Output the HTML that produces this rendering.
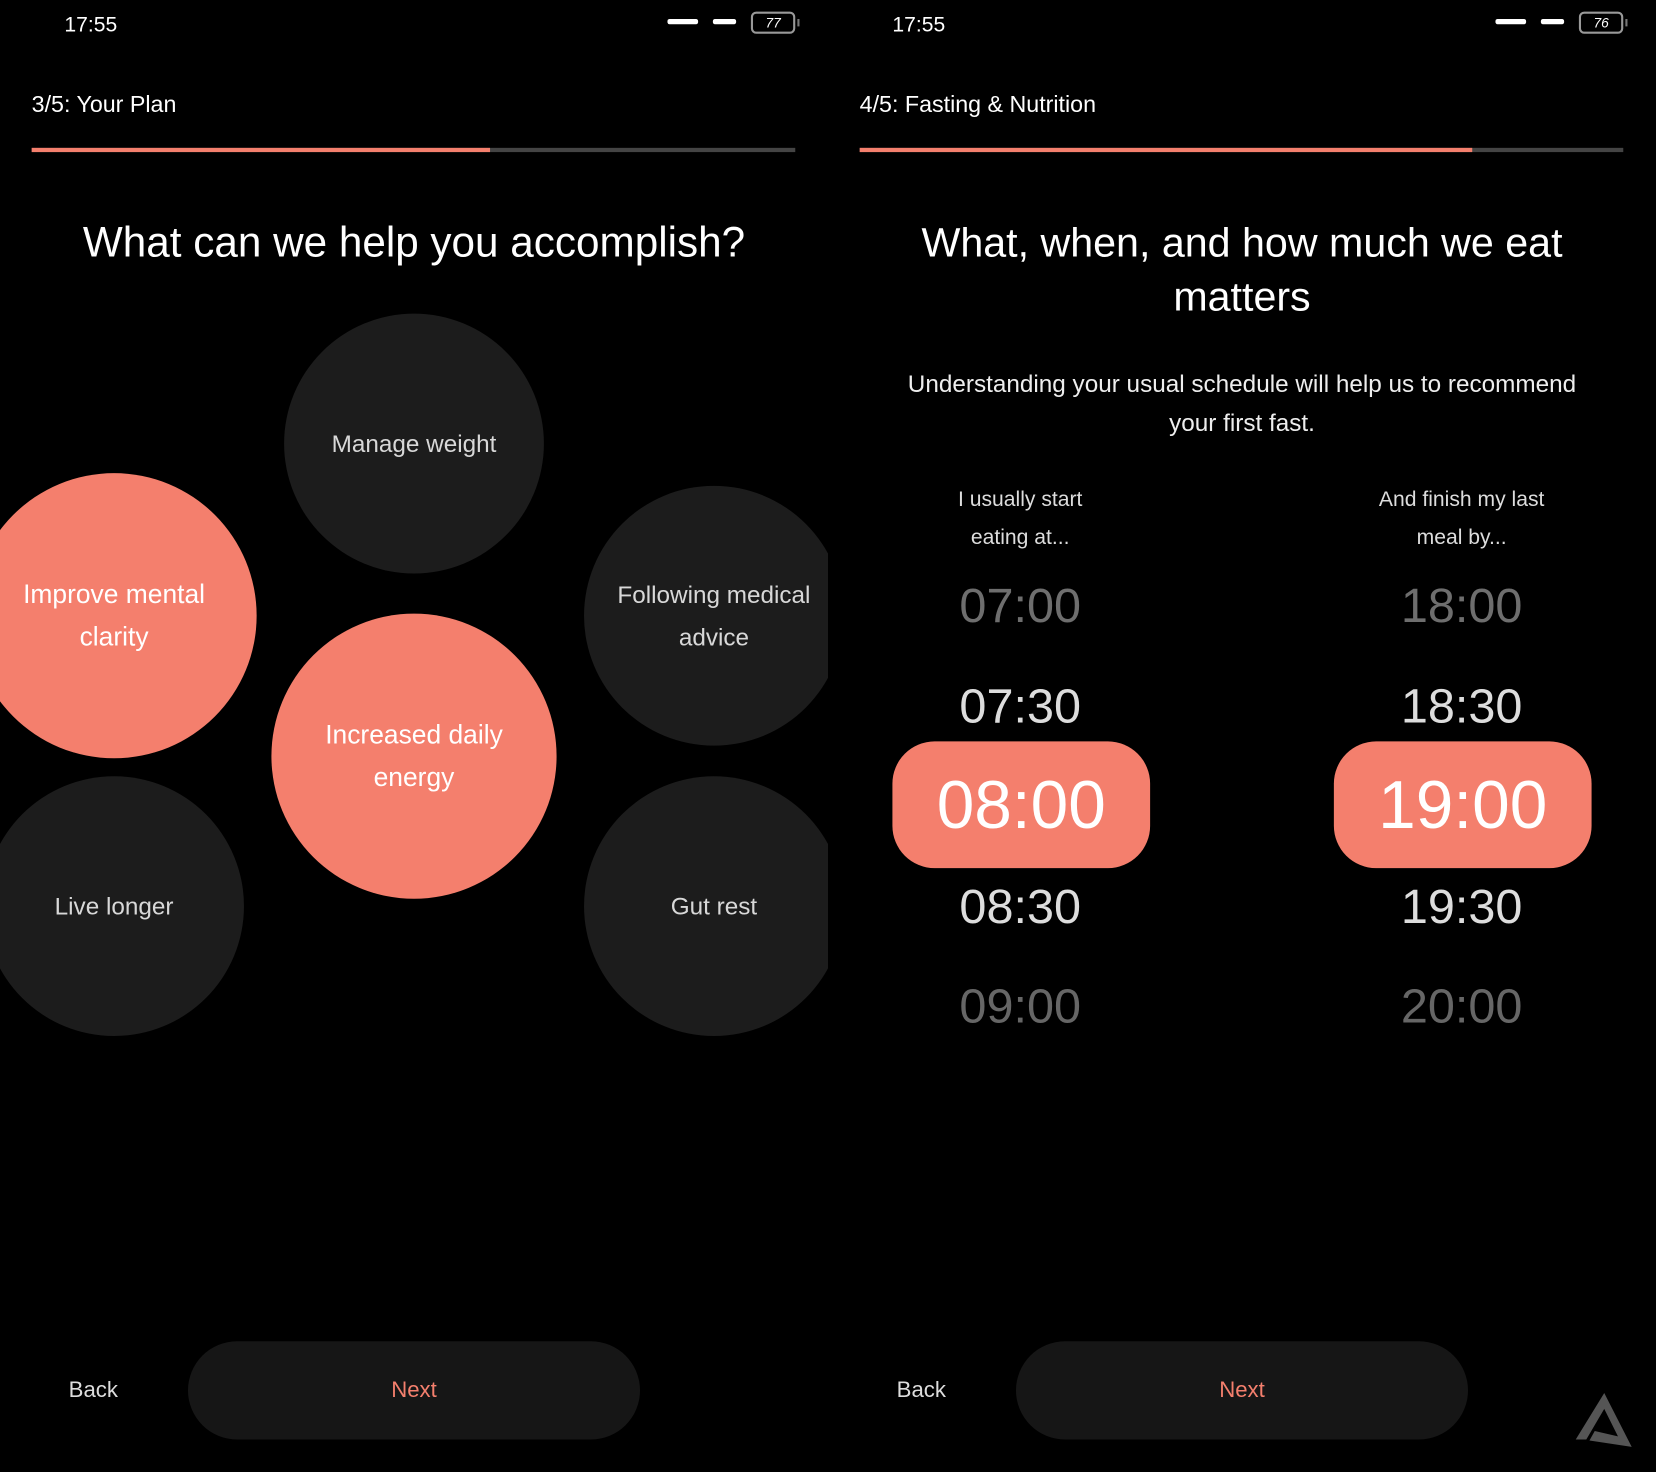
<!DOCTYPE html>
<html><head><meta charset="utf-8"><style>
html,body{margin:0;padding:0;background:#000;width:1656px;height:1472px;overflow:hidden}
#w{position:absolute;left:0;top:0;width:1568px;height:1394px;transform:scale(1.05612);transform-origin:0 0;font-family:"Liberation Sans",sans-serif;color:#fff}
.p{position:absolute;top:0;width:784px;height:1394px;overflow:hidden}
.c{position:absolute;transform:translate(-50%,-50%);white-space:nowrap;text-align:center;line-height:1}
.circ{position:absolute;border-radius:50%;background:#1c1c1c;display:flex;align-items:center;justify-content:center;text-align:center;color:#d8d8d8;font-size:23px;line-height:40px}
.co{background:#f47f6d;color:#fff;font-size:25px}
.bar{position:absolute;left:30px;top:140px;width:723px;height:4px;background:#444}
.bar i{position:absolute;left:0;top:0;height:4px;background:#f47f6d}
.next{position:absolute;left:178px;top:1270px;width:428px;height:93px;border-radius:47px;background:#161616;color:#f47f6d;font-size:21px;display:flex;align-items:center;justify-content:center}
.back{position:absolute;left:65px;top:1305px;font-size:21px;color:#ddd}
.dash{position:absolute;top:18px;height:5px;background:#fff;border-radius:2px}
.bat{position:absolute;top:11px;left:711px;width:38px;height:17px;border:2px solid #999;border-radius:5px;font-size:13px;font-style:italic;text-align:center;line-height:17px;color:#fff}
.bat:after{content:"";position:absolute;right:-6px;top:5px;width:2px;height:7px;background:#777}
.t{position:absolute;transform:translate(-50%,-50%);font-size:46px;white-space:nowrap}
.pill{position:absolute;top:702px;width:244px;height:120px;border-radius:40px;background:#f47f6d;color:#fff;font-size:64px;display:flex;align-items:center;justify-content:center}
</style></head><body><div id="w">
<div class="p" style="left:0">
 <div class="c" style="left:86px;top:24px;font-size:20px">17:55</div>
 <div class="dash" style="left:632px;width:29px"></div><div class="dash" style="left:675px;width:22px"></div>
 <div class="bat">77</div>
 <div style="position:absolute;left:30px;top:86px;font-size:22px">3/5: Your Plan</div>
 <div class="bar"><i style="width:434px"></i></div>
 <div class="c" style="left:392px;top:230px;font-size:40px">What can we help you accomplish?</div>
 <div class="circ" style="left:269px;top:297px;width:246px;height:246px">Manage weight</div>
 <div class="circ co" style="left:-27px;top:448px;width:270px;height:270px">Improve mental<br>clarity</div>
 <div class="circ" style="left:553px;top:460px;width:246px;height:246px">Following medical<br>advice</div>
 <div class="circ co" style="left:257px;top:581px;width:270px;height:270px">Increased daily<br>energy</div>
 <div class="circ" style="left:-15px;top:735px;width:246px;height:246px">Live longer</div>
 <div class="circ" style="left:553px;top:735px;width:246px;height:246px">Gut rest</div>
 <div class="back">Back</div>
 <div class="next">Next</div>
</div>
<div class="p" style="left:784px">
 <div class="c" style="left:86px;top:24px;font-size:20px">17:55</div>
 <div class="dash" style="left:632px;width:29px"></div><div class="dash" style="left:675px;width:22px"></div>
 <div class="bat">76</div>
 <div style="position:absolute;left:30px;top:86px;font-size:22px">4/5: Fasting &amp; Nutrition</div>
 <div class="bar"><i style="width:580px"></i></div>
 <div class="c" style="left:392px;top:256px;font-size:39px;line-height:51px">What, when, and how much we eat<br>matters</div>
 <div class="c" style="left:392px;top:382px;font-size:23px;line-height:37px;color:#eee">Understanding your usual schedule will help us to recommend<br>your first fast.</div>
 <div class="c" style="left:182px;top:491px;font-size:20px;line-height:36px;color:#ddd">I usually start<br>eating at...</div>
 <div class="c" style="left:600px;top:491px;font-size:20px;line-height:36px;color:#ddd">And finish my last<br>meal by...</div>
 <div class="t" style="left:182px;top:573px;color:#6e6e6e">07:00</div>
 <div class="t" style="left:182px;top:668px;color:#ddd">07:30</div>
 <div class="pill" style="left:61px">08:00</div>
 <div class="t" style="left:182px;top:858px;color:#ddd">08:30</div>
 <div class="t" style="left:182px;top:952px;color:#666">09:00</div>
 <div class="t" style="left:600px;top:573px;color:#6e6e6e">18:00</div>
 <div class="t" style="left:600px;top:668px;color:#ddd">18:30</div>
 <div class="pill" style="left:479px">19:00</div>
 <div class="t" style="left:600px;top:858px;color:#ddd">19:30</div>
 <div class="t" style="left:600px;top:952px;color:#666">20:00</div>
 <div class="back">Back</div>
 <div class="next">Next</div>
 <svg style="position:absolute;left:704px;top:1314px" width="60" height="60" viewBox="0 0 60 60"><path d="M31 5 L4 49 L14 49 L31 20 L44 46 L22 41 L17 50 L57 56 Z" fill="#555"/></svg>
</div>
</div></body></html>
